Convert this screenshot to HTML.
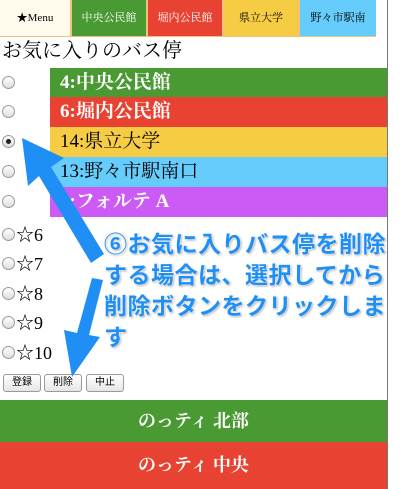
<!DOCTYPE html>
<html><head><meta charset="utf-8"><style>
body{margin:0;width:402px;height:489px;overflow:hidden;background:#fff;font-family:"Liberation Serif","Noto Serif CJK SC",serif;position:relative}
.nav{position:absolute;top:0;left:0;height:37px;width:376px;background:#f3c27a}
.nav div{position:absolute;top:0;height:36px;line-height:36px;text-align:center;font-size:11px;font-family:"Liberation Serif","Noto Serif CJK SC",serif}
.vl{position:absolute;left:387px;top:0;width:1px;height:489px;background:#777}
.title{position:absolute;left:2px;top:38px;font-size:20px;line-height:26px}
.row{position:absolute;left:50px;width:337px;height:30px;line-height:30px;color:#fff;font-size:19px;padding-left:10px;box-sizing:border-box;font-weight:bold}
.radio{position:absolute;left:2px;width:11px;height:11px;border:1px solid #999;border-radius:50%;background:linear-gradient(#fff,#ddd)}
.star{position:absolute;left:16px;font-size:18px;line-height:20px}
.btn{position:absolute;top:374px;height:16px;border:1px solid #999;border-radius:3px;background:linear-gradient(#fff,#e6e6e6);font-size:10px;line-height:16px;text-align:center;font-family:"Liberation Sans","Noto Sans CJK JP",sans-serif}
.bar{position:absolute;left:0;width:387px;color:#fff;font-size:18px;text-align:center;font-weight:bold}
.call{position:absolute;left:104px;top:229px;width:300px;font-family:"Liberation Sans","Noto Sans CJK JP",sans-serif;font-weight:bold;font-size:23px;line-height:31px;color:#1f8ff5;text-shadow:0 0 2px #fff,0 0 2px #fff,1px 1px 2px #888;letter-spacing:0.5px;white-space:nowrap}
</style></head><body>
<div class="nav">
<div style="left:0;width:70px;background:#fffbec">★Menu</div>
<div style="left:72px;width:74px;background:#4a9a33;color:#fff">中央公民館</div>
<div style="left:148px;width:74px;background:#e84232;color:#fff">堀内公民館</div>
<div style="left:224px;width:74px;background:#f6cc45">県立大学</div>
<div style="left:300px;width:76px;background:#66ccfb">野々市駅南</div>
</div>
<div class="vl"></div>
<div class="title">お気に入りのバス停</div>
<div class="row" style="top:68px;background:#4a9a33">4:中央公民館</div>
<div class="row" style="top:97px;background:#e84232">6:堀内公民館</div>
<div class="row" style="top:127px;background:#f6cc45;color:#000;font-weight:normal">14:県立大学</div>
<div class="row" style="top:157px;background:#66ccfb;color:#000;font-weight:normal">13:野々市駅南口</div>
<div class="row" style="top:187px;background:#cc5af5">5:フォルテ A</div>
<div class="radio" style="top:76px"></div>
<div class="radio" style="top:105px"></div>
<div class="radio" style="top:135px"><div style="margin:3px;width:5px;height:5px;border-radius:50%;background:#222"></div></div>
<div class="radio" style="top:165px"></div>
<div class="radio" style="top:195px"></div>
<div class="radio" style="top:228px"></div><div class="star" style="top:225px">☆6</div>
<div class="radio" style="top:257px"></div><div class="star" style="top:254px">☆7</div>
<div class="radio" style="top:287px"></div><div class="star" style="top:284px">☆8</div>
<div class="radio" style="top:316px"></div><div class="star" style="top:313px">☆9</div>
<div class="radio" style="top:346px"></div><div class="star" style="top:343px">☆10</div>
<div class="btn" style="left:3px;width:36px">登録</div>
<div class="btn" style="left:44px;width:36px">削除</div>
<div class="btn" style="left:86px;width:36px">中止</div>
<div class="bar" style="top:400px;height:42px;line-height:42px;background:#4a9a33">のっティ 北部</div>
<div class="bar" style="top:442px;height:47px;line-height:47px;background:#e84232">のっティ 中央</div>
<svg style="position:absolute;left:0;top:0" width="402" height="489">
<polygon points="22,138 64,158 51,167 104,254 91,263 39,176 28,186" fill="#1f8ff5"/>
<polygon points="72,377 100,337 89,335 103,280 92,278 77,333 64,330" fill="#1f8ff5"/>
</svg>
<div class="call">⑥お気に入りバス停を削除<br>する場合は、選択してから<br>削除ボタンをクリックしま<br>す</div>
</body></html>
